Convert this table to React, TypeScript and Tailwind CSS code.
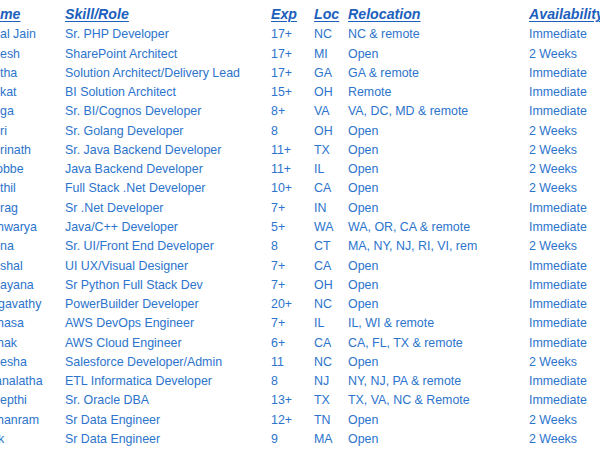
const rows: [string, string, string, string, string, string][] = [
  ["al Jain", "Sr. PHP Developer", "17+", "NC", "NC & remote", "Immediate"],
  ["esh", "SharePoint Architect", "17+", "MI", "Open", "2 Weeks"],
  ["tha", "Solution Architect/Delivery Lead", "17+", "GA", "GA & remote", "Immediate"],
  ["kat", "BI Solution Architect", "15+", "OH", "Remote", "Immediate"],
  ["ga", "Sr. BI/Cognos Developer", "8+", "VA", "VA, DC, MD & remote", "Immediate"],
  ["ri", "Sr. Golang Developer", "8", "OH", "Open", "2 Weeks"],
  ["rinath", "Sr. Java Backend Developer", "11+", "TX", "Open", "2 Weeks"],
  ["obbe", "Java Backend Developer", "11+", "IL", "Open", "2 Weeks"],
  ["thil", "Full Stack .Net Developer", "10+", "CA", "Open", "2 Weeks"],
  ["rag", "Sr .Net Developer", "7+", "IN", "Open", "Immediate"],
  ["hwarya", "Java/C++ Developer", "5+", "WA", "WA, OR, CA & remote", "Immediate"],
  ["na", "Sr. UI/Front End Developer", "8", "CT", "MA, NY, NJ, RI, VI, rem", "2 Weeks"],
  ["shal", "UI UX/Visual Designer", "7+", "CA", "Open", "Immediate"],
  ["ayana", "Sr Python Full Stack Dev", "7+", "OH", "Open", "Immediate"],
  ["gavathy", "PowerBuilder Developer", "20+", "NC", "Open", "Immediate"],
  ["hasa", "AWS DevOps Engineer", "7+", "IL", "IL, WI & remote", "Immediate"],
  ["hak", "AWS Cloud Engineer", "6+", "CA", "CA, FL, TX & remote", "Immediate"],
  ["esha", "Salesforce Developer/Admin", "11", "NC", "Open", "2 Weeks"],
  ["analatha", "ETL Informatica Developer", "8", "NJ", "NY, NJ, PA & remote", "Immediate"],
  ["epthi", "Sr. Oracle DBA", "13+", "TX", "TX, VA, NC & Remote", "Immediate"],
  ["hanram", "Sr Data Engineer", "12+", "TN", "Open", "2 Weeks"],
  ["k", "Sr Data Engineer", "9", "MA", "Open", "2 Weeks"],
];

// first letters of some names are cut by the left edge
const cut: Record<string, string> = {
  hwarya: "ml-[-3px]",
  gavathy: "ml-[-2px]",
  hasa: "ml-[-3px]",
  hak: "ml-[-3px]",
  analatha: "ml-[-5px]",
  hanram: "ml-[-3px]",
  obbe: "ml-[-4px]",
  k: "ml-[-2px]",
};

function Header({ w, label }: { w: string; label: string }) {
  return (
    <div className={`${w} shrink-0 whitespace-nowrap`}>
      <span className="text-[14.2px] font-bold italic underline decoration-1 underline-offset-2 text-[#1d5fbd]">
        {label}
      </span>
    </div>
  );
}

export default function App() {
  return (
    <div
      className="w-[600px] h-[450px] overflow-hidden bg-white pt-[4px] text-[#2c74cc]"
      style={{ fontFamily: '"Liberation Sans", Arial, sans-serif' }}
    >
      <div className="flex items-center h-[20px]">
        <Header w="w-[65px]" label="me" />
        <Header w="w-[206px]" label="Skill/Role" />
        <Header w="w-[43px]" label="Exp" />
        <Header w="w-[34px]" label="Loc" />
        <Header w="w-[181px]" label="Relocation" />
        <Header w="w-[120px]" label="Availability" />
      </div>
      <div className="pt-[1px]">
        {rows.map((r, i) => (
          <div key={i} className="flex items-center h-[19.28px] text-[12.4px] whitespace-nowrap">
            <div className="w-[65px] shrink-0 overflow-hidden">
              <div className={cut[r[0]] ?? ""}>{r[0]}</div>
            </div>
            <div className="w-[206px] shrink-0">{r[1]}</div>
            <div className="w-[43px] shrink-0">{r[2]}</div>
            <div className="w-[34px] shrink-0">{r[3]}</div>
            <div className="w-[181px] shrink-0">{r[4]}</div>
            <div className="w-[120px] shrink-0">{r[5]}</div>
          </div>
        ))}
      </div>
    </div>
  );
}
